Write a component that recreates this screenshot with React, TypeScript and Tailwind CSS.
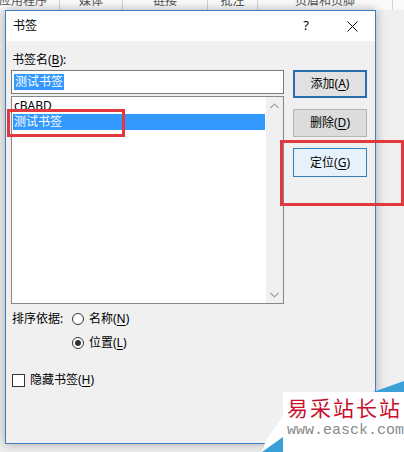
import React from "react";

const Key = ({ children }: { children: string }) => (
  <span className="underline underline-offset-[2px]">{children}</span>
);

const tabs = [
  { label: "应用程序", w: "w-[60px] justify-start -indent-[1px]" },
  { label: "媒体", w: "w-[63px] justify-center" },
  { label: "链接", w: "w-[85px] justify-center" },
  { label: "批注", w: "w-[50px] justify-center" },
  { label: "页眉和页脚", w: "w-[135px] justify-center" },
];

export default function App() {
  return (
    <div className="relative w-[404px] h-[452px] overflow-hidden bg-[#efefef] text-[12px] text-black font-['Noto_Sans','Noto_Sans_CJK_SC',sans-serif]">
      {/* ribbon tabs peeking out behind the dialog */}
      <div className="flex h-[10px] overflow-hidden bg-[#fafafa] text-[#555]">
        {tabs.map((t) => (
          <div key={t.label} className={`flex ${t.w} border-r border-[#d4d4d4]`}>
            <span className="-mt-[5px] leading-[12px] whitespace-nowrap">{t.label}</span>
          </div>
        ))}
      </div>

      {/* ================= DIALOG ================= */}
      <div className="absolute left-[5px] top-[10px] w-[371px] h-[434px] border border-[#3c7fbf] bg-[#f0f0f0] flex flex-col shadow-[0_0_10px_rgba(0,0,0,0.3)]">
        {/* Title bar */}
        <div className="h-[30px] bg-white flex items-center">
          <span className="pl-[7px]">书签</span>
          <div className="ml-auto flex h-full">
            <div className="w-[46px] flex items-center justify-center text-[13px]">?</div>
            <div className="w-[46px] flex items-center justify-center">
              <svg width="11" height="11" viewBox="0 0 11 11">
                <path d="M0.5 0.5 L10.5 10.5 M10.5 0.5 L0.5 10.5" stroke="#111" strokeWidth="1" />
              </svg>
            </div>
          </div>
        </div>

        {/* Body */}
        <div className="flex-1 pl-[5px] pt-[11px]">
          <div className="flex gap-[9px]">
            {/* Left column */}
            <div className="w-[273px] flex flex-col">
              <div className="leading-[16px] pl-[1px]">
                书签名(<Key>B</Key>):
              </div>
              <div className="mt-[2px] h-[24px] border border-[#7a7a7a] bg-white flex items-center pl-[2px]">
                <span className="bg-[#3399ff] text-white leading-[16px] px-[1px]">测试书签</span>
              </div>
              <div className="mt-[2px] h-[208px] border border-[#828790] bg-white flex">
                <div className="flex-1 pt-[1px] px-[1px]">
                  <div className="h-[16px] leading-[16px] pl-[1px]">cBABD</div>
                  <div className="h-[16px] leading-[16px] pl-[1px] bg-[#3399ff] text-white">测试书签</div>
                </div>
                <div className="w-[17px] bg-[#f0f0f0] flex flex-col justify-between">
                  <div className="h-[17px] flex items-center justify-center">
                    <svg width="9" height="6" viewBox="0 0 9 6">
                      <path d="M0.5 5 L4.5 1 L8.5 5" stroke="#a3a3a3" strokeWidth="1.2" fill="none" />
                    </svg>
                  </div>
                  <div className="h-[17px] flex items-center justify-center">
                    <svg width="9" height="6" viewBox="0 0 9 6">
                      <path d="M0.5 1 L4.5 5 L8.5 1" stroke="#a3a3a3" strokeWidth="1.2" fill="none" />
                    </svg>
                  </div>
                </div>
              </div>
            </div>

            {/* Right column: buttons */}
            <div className="mt-[18px] w-[74px] flex flex-col gap-[11px]">
              <button className="h-[28px] border-2 border-[#2a6eb0] bg-[#e1e1e1] flex items-center justify-center">
                添加(<Key>A</Key>)
              </button>
              <button className="h-[28px] border border-[#b4b4b4] bg-[#dcdcdc] flex items-center justify-center">
                删除(<Key>D</Key>)
              </button>
              <button className="h-[29px] border border-[#2f7fbe] bg-[#e5f1fb] flex items-center justify-center">
                定位(<Key>G</Key>)
              </button>
            </div>
          </div>

          {/* Sort options */}
          <div className="mt-[7px] flex items-center h-[16px] leading-[16px]">
            <span className="w-[61px] pl-[1px]">排序依据:</span>
            <span className="w-[12px] h-[12px] rounded-full border border-[#333] bg-white" />
            <span className="ml-[5px]">
              名称(<Key>N</Key>)
            </span>
          </div>
          <div className="mt-[8px] flex items-center h-[16px] leading-[16px] pl-[61px]">
            <span className="w-[12px] h-[12px] rounded-full border border-[#333] bg-white flex items-center justify-center">
              <span className="w-[6px] h-[6px] rounded-full bg-[#333]" />
            </span>
            <span className="ml-[5px]">
              位置(<Key>L</Key>)
            </span>
          </div>

          {/* Hide bookmarks */}
          <div className="mt-[21px] flex items-center h-[16px] leading-[16px] pl-[1px]">
            <span className="w-[13px] h-[13px] border border-[#333] bg-white" />
            <span className="ml-[5px]">
              隐藏书签(<Key>H</Key>)
            </span>
          </div>
        </div>
      </div>

      {/* ================= RED ANNOTATIONS ================= */}
      <div className="absolute left-[7px] top-[109px] w-[118px] h-[28px] border-[3px] border-[#e2393f]" />
      <div className="absolute left-[280px] top-[140px] w-[124px] h-[66px] border-[3px] border-[#e2393f]" />

      {/* ================= WATERMARK ================= */}
      <div className="absolute left-[260px] top-[380px] w-[144px] h-[72px] overflow-hidden">
        <svg className="absolute inset-0" width="144" height="72" viewBox="0 0 144 72">
          <polygon points="23,12 144,12 144,72 2,72 6,60 23,36" fill="#ffffff" />
          <polygon points="113,12 144,1 144,12" fill="#3aa0d8" />
          <polygon points="2,72 23,57 23,72" fill="#3aa0d8" />
        </svg>
        <div className="absolute left-[27px] top-[15px] text-[21px] leading-[26px] tracking-[2px] text-[#c8102e] whitespace-nowrap">
          易采站长站
        </div>
        <div className="absolute left-[27px] top-[42px] text-[15px] leading-[18px] text-[#8a8a8a] whitespace-nowrap font-['Liberation_Mono',monospace]">
          www.easck.com
        </div>
      </div>
    </div>
  );
}
